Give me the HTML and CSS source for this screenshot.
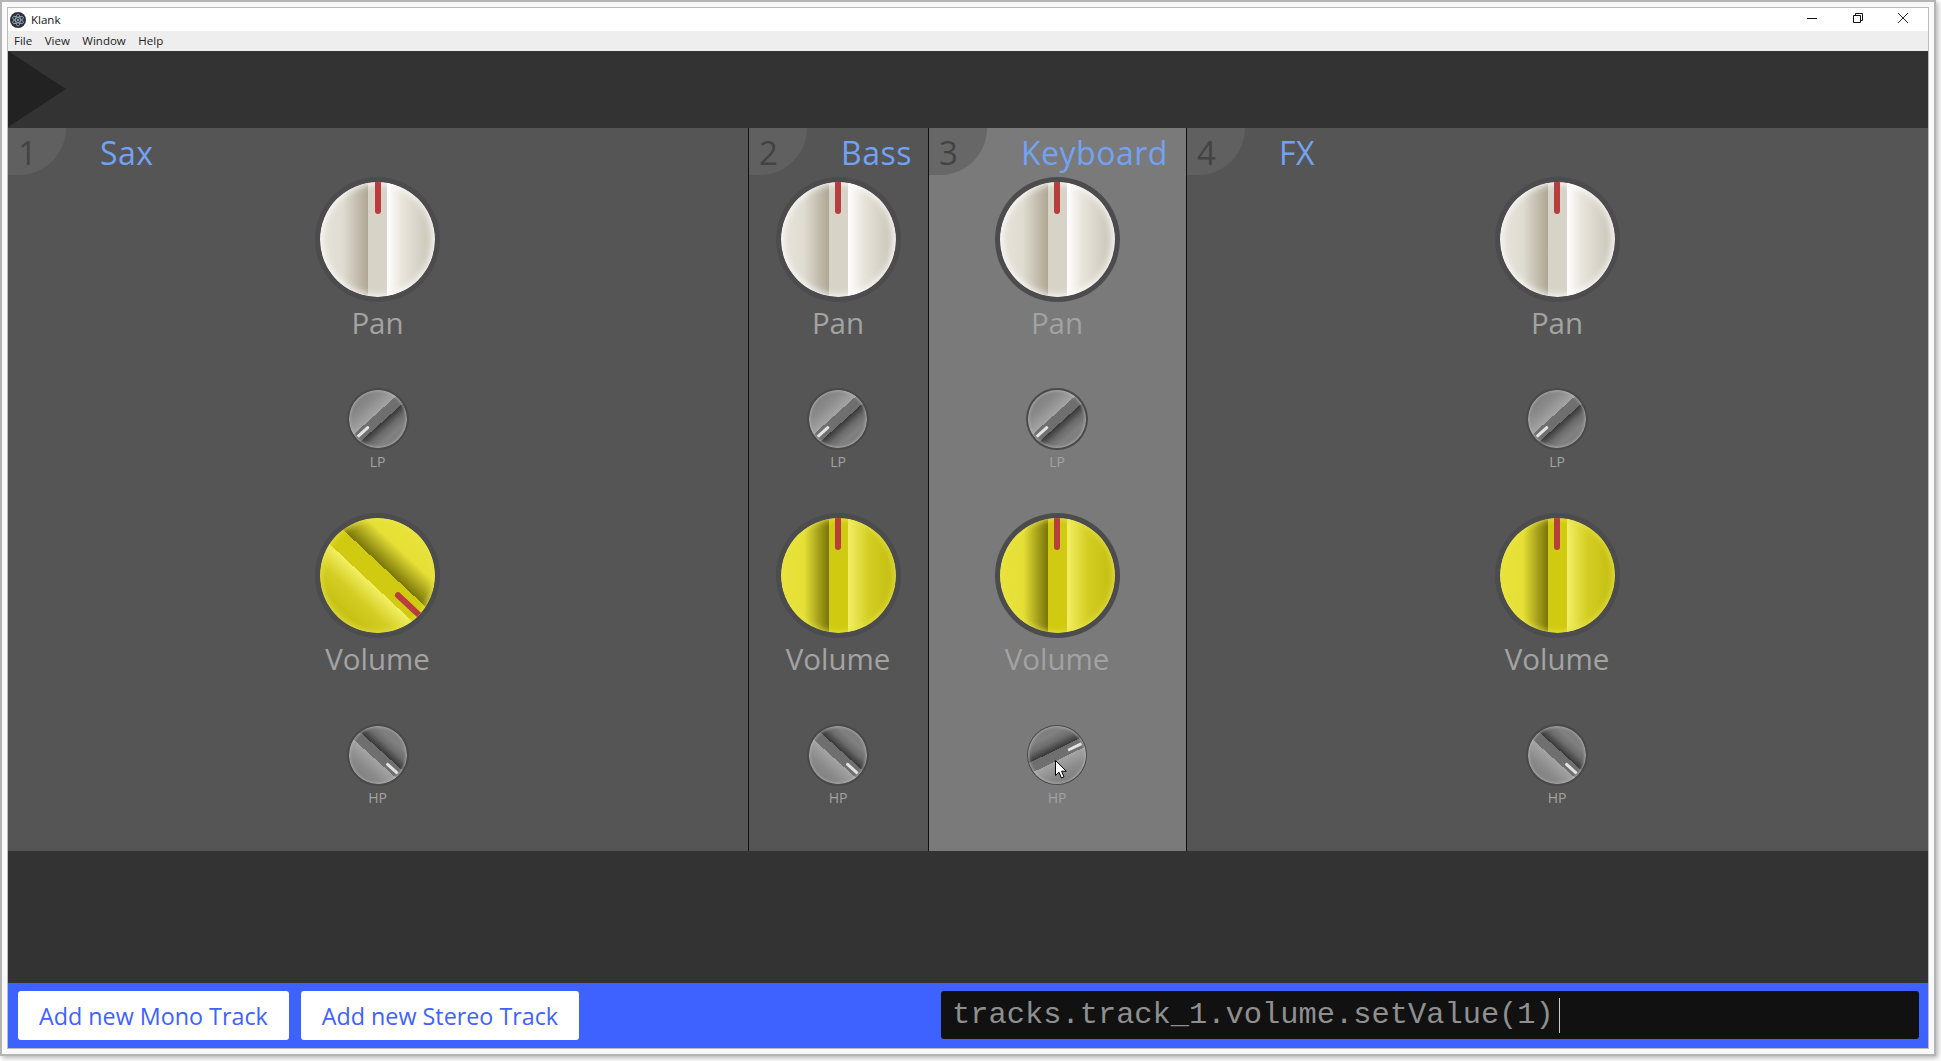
FILE: index.html
```html
<!DOCTYPE html>
<html>

<head>
    <meta charset='utf-8'>
    <title>Klank</title>
    <link rel="stylesheet" href="styles.css">
</head>

<body>
    <div class="frame">
        <div class="window">
            <div class="titlebar">
                <svg class="app-icon" viewBox="0 0 16 16">
                    <circle cx="8" cy="8" r="8" fill="#2b2f3a" />
                    <g fill="none" stroke="#9fb4c4" stroke-width="0.8">
                        <ellipse cx="8" cy="8" rx="6" ry="2.4" transform="rotate(30 8 8)" />
                        <ellipse cx="8" cy="8" rx="6" ry="2.4" transform="rotate(90 8 8)" />
                        <ellipse cx="8" cy="8" rx="6" ry="2.4" transform="rotate(150 8 8)" />
                    </g>
                    <circle cx="8" cy="8" r="1.1" fill="#9fb4c4" />
                </svg>
                <span class="app-title">Klank</span>
                <div class="win-controls">
                    <svg class="win-btn" viewBox="0 0 10 10">
                        <path d="M0 5.5H10" stroke="#111" fill="none" />
                    </svg>
                    <svg class="win-btn" viewBox="0 0 10 10">
                        <path d="M0.5 2.5H7.5V9.5H0.5ZM2.5 2.5V0.5H9.5V7.5H7.5" stroke="#111" fill="none" />
                    </svg>
                    <svg class="win-btn" viewBox="0 0 10 10">
                        <path d="M0 0L10 10M10 0L0 10" stroke="#111" stroke-width="0.9" fill="none" />
                    </svg>
                </div>
            </div>
            <div class="menubar">
                <span>File</span>
                <span>View</span>
                <span>Window</span>
                <span>Help</span>
            </div>
            <div class="toolbar">
                <div class="play"></div>
            </div>

            <div class="tracks">
                <!-- Sax -->
                <section class="track track-wide">
                    <div class="track-head"><span class="track-num">1</span><span class="track-name">Sax</span></div>
                    <div class="control control-big">
                        <div class="knob knob-big knob-pan"><div class="face"><i class="needle"></i></div></div>
                        <span class="label">Pan</span>
                    </div>
                    <div class="control control-small">
                        <div class="knob knob-small"><div class="face turn-lp"><i class="needle"></i></div></div>
                        <span class="label-small">LP</span>
                    </div>
                    <div class="control control-big">
                        <div class="knob knob-big knob-vol"><div class="face turn-full"><i class="needle"></i></div></div>
                        <span class="label">Volume</span>
                    </div>
                    <div class="control control-small">
                        <div class="knob knob-small"><div class="face turn-hp"><i class="needle"></i></div></div>
                        <span class="label-small">HP</span>
                    </div>
                </section>

                <!-- Bass -->
                <section class="track track-bass">
                    <div class="track-head"><span class="track-num">2</span><span class="track-name">Bass</span></div>
                    <div class="control control-big">
                        <div class="knob knob-big knob-pan"><div class="face"><i class="needle"></i></div></div>
                        <span class="label">Pan</span>
                    </div>
                    <div class="control control-small">
                        <div class="knob knob-small"><div class="face turn-lp"><i class="needle"></i></div></div>
                        <span class="label-small">LP</span>
                    </div>
                    <div class="control control-big">
                        <div class="knob knob-big knob-vol"><div class="face"><i class="needle"></i></div></div>
                        <span class="label">Volume</span>
                    </div>
                    <div class="control control-small">
                        <div class="knob knob-small"><div class="face turn-hp"><i class="needle"></i></div></div>
                        <span class="label-small">HP</span>
                    </div>
                </section>

                <!-- Keyboard, selected -->
                <section class="track track-keys selected">
                    <div class="track-head"><span class="track-num">3</span><span class="track-name">Keyboard</span></div>
                    <div class="control control-big">
                        <div class="knob knob-big knob-pan"><div class="face"><i class="needle"></i></div></div>
                        <span class="label">Pan</span>
                    </div>
                    <div class="control control-small">
                        <div class="knob knob-small"><div class="face turn-lp"><i class="needle"></i></div></div>
                        <span class="label-small">LP</span>
                    </div>
                    <div class="control control-big">
                        <div class="knob knob-big knob-vol"><div class="face"><i class="needle"></i></div></div>
                        <span class="label">Volume</span>
                    </div>
                    <div class="control control-small">
                        <div class="knob-wrap">
                            <div class="knob knob-small knob-drag"><div class="face turn-drag"><i class="needle"></i></div></div>
                            <svg class="cursor" viewBox="0 0 12 19">
                                <path d="M0.5 0.5V15.5L4 12.2L6.4 18L9 16.9L6.6 11.2H11.3Z" fill="#fff" stroke="#000" />
                            </svg>
                        </div>
                        <span class="label-small">HP</span>
                    </div>
                </section>

                <!-- FX -->
                <section class="track track-wide">
                    <div class="track-head"><span class="track-num">4</span><span class="track-name">FX</span></div>
                    <div class="control control-big">
                        <div class="knob knob-big knob-pan"><div class="face"><i class="needle"></i></div></div>
                        <span class="label">Pan</span>
                    </div>
                    <div class="control control-small">
                        <div class="knob knob-small"><div class="face turn-lp"><i class="needle"></i></div></div>
                        <span class="label-small">LP</span>
                    </div>
                    <div class="control control-big">
                        <div class="knob knob-big knob-vol"><div class="face"><i class="needle"></i></div></div>
                        <span class="label">Volume</span>
                    </div>
                    <div class="control control-small">
                        <div class="knob knob-small"><div class="face turn-hp"><i class="needle"></i></div></div>
                        <span class="label-small">HP</span>
                    </div>
                </section>
            </div>

            <div class="spacer"></div>

            <div class="footer">
                <button class="add-btn">Add new Mono Track</button>
                <button class="add-btn">Add new Stereo Track</button>
                <div class="console">tracks.track_1.volume.setValue(1)<span class="caret"></span></div>
            </div>
        </div>
    </div>
</body>

</html>
```

FILE: styles.css
```css
html,
body {
    width: 100%;
    height: 100vh;
    margin: 0;
    padding: 0;
    overflow: hidden;
    background: #fff;
}

.frame {
    width: 1936px;
    height: 1056px;
    box-sizing: border-box;
    border: 2px solid #b4b4b4;
    padding: 5px;
    background: #f9f9f9;
    box-shadow: 2px 2px 5px rgba(0, 0, 0, 0.3);
}

.window {
    height: 100%;
    box-sizing: border-box;
    border: 1px solid #bbb;
    display: flex;
    flex-direction: column;
    background: #333;
    font-family: "Open Sans", sans-serif;
}

/* window chrome */
.titlebar {
    height: 23px;
    background: #fff;
    display: flex;
    align-items: center;
    padding-left: 2px;
    font-size: 11.5px;
    color: #111;
}

.app-icon {
    width: 16px;
    height: 16px;
}

.app-title {
    margin-left: 5px;
}

.win-controls {
    margin-left: auto;
    margin-right: 20px;
    display: flex;
    gap: 35.5px;
    margin-bottom: 3px;
}

.win-btn {
    width: 10px;
    height: 10px;
}

.menubar {
    height: 20px;
    box-sizing: border-box;
    padding: 0 0 2px 6px;
    background: #eee;
    display: flex;
    align-items: center;
    gap: 12.5px;
    font-size: 11.5px;
    color: #222;
}

.toolbar {
    height: 77px;
    background: #333;
}

.play {
    width: 0;
    height: 0;
    border-left: 58px solid #222;
    border-top: 38.5px solid transparent;
    border-bottom: 38.5px solid transparent;
}

/* tracks */
.tracks {
    height: 723px;
    display: flex;
    overflow: hidden;
}

.track {
    background: #555;
    border-right: 1px solid #111;
    display: flex;
    flex-direction: column;
    align-items: center;
    box-sizing: border-box;
}

.track:last-child {
    border-right: none;
}

.track-wide {
    flex: 1 1 741px;
}

.track-bass {
    width: 180px;
}

.track-keys {
    width: 258px;
}

.selected {
    background: #7a7a7a;
}

.track-head {
    width: 100%;
    height: 54px;
    flex: none;
    display: flex;
    align-items: flex-start;
}

.track-num {
    width: 58px;
    height: 47px;
    box-sizing: border-box;
    padding-left: 10px;
    background: #606060;
    border-bottom-right-radius: 47px;
    color: #434343;
    font-size: 33px;
    line-height: 49px;
}

.selected .track-num {
    background: #676767;
}

.track-name {
    margin-left: 34px;
    color: #74a2f2;
    font-size: 32px;
    letter-spacing: 0.5px;
    line-height: 49px;
}

.control {
    flex: none;
    padding-right: 1px;
    display: flex;
    flex-direction: column;
    align-items: center;
}

.control-big {
    height: 208px;
}

.control-small {
    height: 128px;
}

/* knobs */
.knob {
    position: relative;
    border-radius: 50%;
    overflow: hidden;
    flex-shrink: 0;
}

.knob-big {
    width: 115px;
    height: 115px;
    box-shadow: 0 0 0 5px #4c4c4e;
}

.knob-small {
    width: 58px;
    height: 58px;
    box-shadow: 0 0 0 2px #4a4a4a;
}

.knob-drag {
    box-shadow: 0 0 0 1px #4a4a4a;
}

.face {
    position: absolute;
    inset: 0;
    border-radius: 50%;
    background: linear-gradient(90deg,
            #7c7c7c 0%, #808080 14%, #6c6c6c 27%, #383838 41.4%,
            #6f6f6f 41.4%, #6f6f6f 58.5%,
            #a4a4a4 58.5%, #8a8a8a 82%, #7f7f7f 100%);
}

/* rim highlight, the needle paints over it */
.face::before {
    content: "";
    position: absolute;
    inset: 0;
    border-radius: 50%;
    box-shadow: inset 0 0 3px 1px rgba(185, 185, 185, 0.75);
}

.knob-pan .face {
    background: linear-gradient(90deg,
            #e7e4db 0%, #e0dcd2 20%, #b0a895 41.4%,
            #d8d3c7 41.4%, #d8d3c7 58.5%,
            #fff 58.5%, #e8e5dc 71%, #cfcbbf 92%, #d6d3c8 100%);
}

.knob-pan .face::before {
    box-shadow: inset 0 0 7px 2px rgba(255, 255, 255, 0.85);
}

.knob-vol .face {
    background: linear-gradient(90deg,
            #e8e23a 0%, #e6e036 20%, #7a7608 41.4%,
            #d0ca10 41.4%, #d0ca10 58.5%,
            #f3ef63 58.5%, #d4ce24 76%, #c8c216 92%, #cac41a 100%);
}

.knob-vol .face::before {
    box-shadow: inset 0 0 6px 1px rgba(232, 228, 80, 0.9);
}

.needle {
    position: absolute;
    top: 0;
    left: 50%;
    margin-left: -3px;
    width: 6px;
    height: 32px;
    background: #b93c3f;
    border-radius: 0 0 3px 3px;
}

.knob-small .needle {
    top: 2px;
    margin-left: -1.5px;
    width: 3px;
    height: 15px;
    background: #e2e2e2;
    border-radius: 1px;
}

/* knob positions */
.turn-lp {
    transform: rotate(-132deg);
}

.turn-hp {
    transform: rotate(132deg);
}

.turn-full {
    transform: rotate(133deg);
}

.turn-drag {
    transform: rotate(64deg);
}

.knob-wrap {
    position: relative;
    width: 58px;
    height: 58px;
}

.cursor {
    position: absolute;
    left: 27px;
    top: 34px;
    width: 12px;
    height: 19px;
}

.label {
    margin-top: 6px;
    color: #a3a3a3;
    font-size: 29.5px;
    line-height: 40px;
}

.label-small {
    margin-top: 4px;
    color: #a3a3a3;
    font-size: 14px;
    line-height: 19px;
}

.selected .label,
.selected .label-small {
    color: #a2a2a2;
}

/* bottom bar */
.spacer {
    flex: 1;
    background: #333;
}

.footer {
    height: 65px;
    box-sizing: border-box;
    padding: 8px 9px 8px 10px;
    background: #3e62ff;
    display: flex;
    gap: 12px;
}

.add-btn {
    height: 49px;
    padding: 0 21px;
    border: none;
    border-radius: 3px;
    background: #fff;
    color: #3e62ff;
    font-family: "Open Sans", sans-serif;
    font-size: 23.3px;
}

.console {
    margin-left: auto;
    width: 978px;
    height: 48px;
    box-sizing: border-box;
    padding-left: 11px;
    border-radius: 3px;
    background: #111;
    color: #8f8f8f;
    font-family: "Liberation Mono", monospace;
    font-size: 30.4px;
    line-height: 48px;
    display: flex;
    align-items: center;
}

.caret {
    width: 1px;
    height: 35px;
    margin-left: 5px;
    background: #ccc;
}
```
